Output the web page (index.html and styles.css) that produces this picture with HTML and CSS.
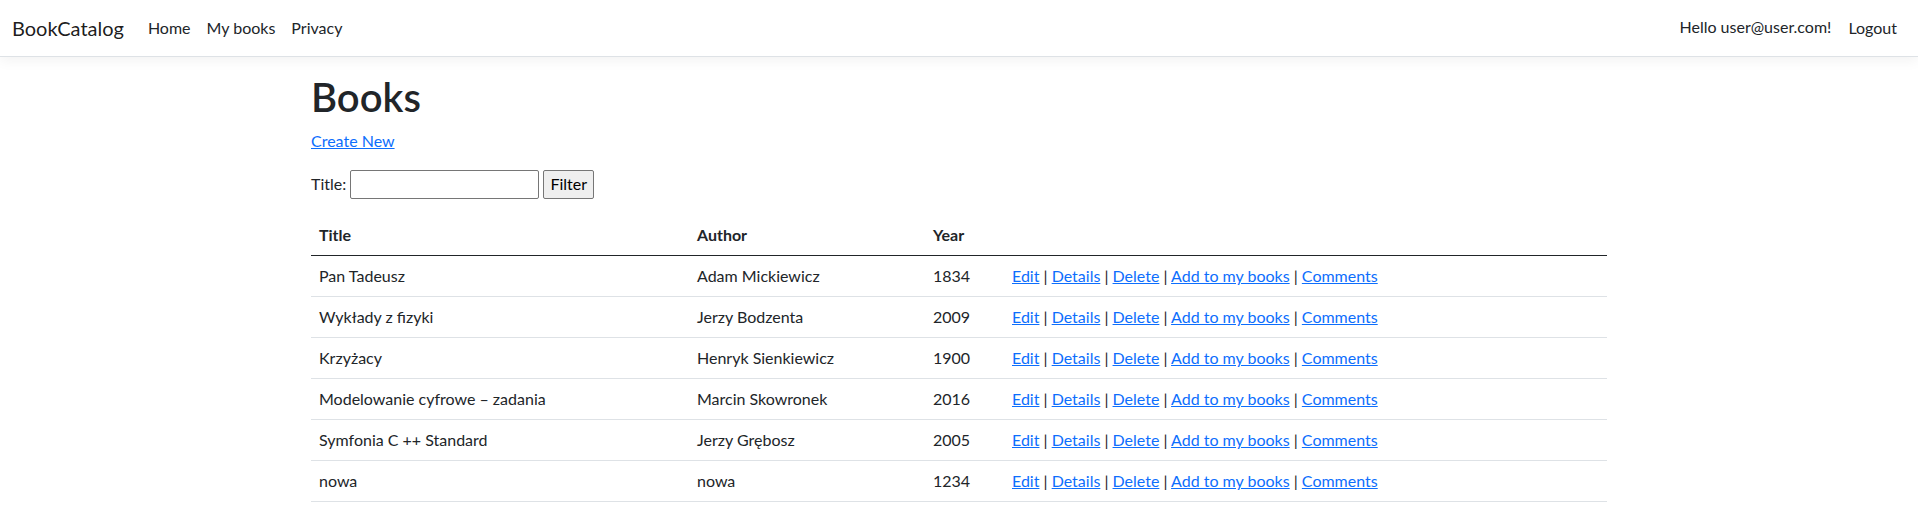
FILE: index.html
```html
<!DOCTYPE html>
<html lang="en">
<head>
<meta charset="utf-8">
<title>Index - BookCatalog</title>
<link rel="stylesheet" href="styles.css">
</head>
<body>
<header>
  <nav class="navbar">
    <a class="brand" href="#">BookCatalog</a>
    <div class="nav-collapse">
      <ul class="nav-list">
        <li><a class="nav-link" href="#">Home</a></li>
        <li><a class="nav-link" href="#">My books</a></li>
        <li><a class="nav-link" href="#">Privacy</a></li>
      </ul>
      <ul class="nav-list">
        <li><a class="nav-link" href="#">Hello user@user.com!</a></li>
        <li><button class="nav-link nav-btn" type="button">Logout</button></li>
      </ul>
    </div>
  </nav>
</header>
<main class="container">
  <h1 class="title">Books</h1>
  <p class="para"><a class="link" href="#">Create New</a></p>
  <form class="filter">
    <label class="filter-label" for="s">Title:</label>
    <input class="filter-input" id="s" type="text">
    <input class="filter-btn" type="submit" value="Filter">
  </form>
  <table class="table">
    <thead>
      <tr>
        <th class="col-title">Title</th>
        <th class="col-author">Author</th>
        <th class="col-year">Year</th>
        <th class="col-actions"></th>
      </tr>
    </thead>
    <tbody>
      <tr>
        <td>Pan Tadeusz</td><td>Adam Mickiewicz</td><td>1834</td>
        <td><a class="link" href="#">Edit</a> | <a class="link" href="#">Details</a> | <a class="link" href="#">Delete</a> | <a class="link" href="#">Add to my books</a> | <a class="link" href="#">Comments</a></td>
      </tr>
      <tr>
        <td>Wykłady z fizyki</td><td>Jerzy Bodzenta</td><td>2009</td>
        <td><a class="link" href="#">Edit</a> | <a class="link" href="#">Details</a> | <a class="link" href="#">Delete</a> | <a class="link" href="#">Add to my books</a> | <a class="link" href="#">Comments</a></td>
      </tr>
      <tr>
        <td>Krzyżacy</td><td>Henryk Sienkiewicz</td><td>1900</td>
        <td><a class="link" href="#">Edit</a> | <a class="link" href="#">Details</a> | <a class="link" href="#">Delete</a> | <a class="link" href="#">Add to my books</a> | <a class="link" href="#">Comments</a></td>
      </tr>
      <tr>
        <td>Modelowanie cyfrowe – zadania</td><td>Marcin Skowronek</td><td>2016</td>
        <td><a class="link" href="#">Edit</a> | <a class="link" href="#">Details</a> | <a class="link" href="#">Delete</a> | <a class="link" href="#">Add to my books</a> | <a class="link" href="#">Comments</a></td>
      </tr>
      <tr>
        <td>Symfonia C ++ Standard</td><td>Jerzy Grębosz</td><td>2005</td>
        <td><a class="link" href="#">Edit</a> | <a class="link" href="#">Details</a> | <a class="link" href="#">Delete</a> | <a class="link" href="#">Add to my books</a> | <a class="link" href="#">Comments</a></td>
      </tr>
      <tr>
        <td>nowa</td><td>nowa</td><td>1234</td>
        <td><a class="link" href="#">Edit</a> | <a class="link" href="#">Details</a> | <a class="link" href="#">Delete</a> | <a class="link" href="#">Add to my books</a> | <a class="link" href="#">Comments</a></td>
      </tr>
    </tbody>
  </table>
</main>
</body>
</html>
```

FILE: styles.css
```css
* { box-sizing: border-box; }

html, body {
  margin: 0;
  padding: 0;
}

body {
  font-family: "Lato", "Open Sans", "Liberation Sans", sans-serif;
  font-size: 16px;
  line-height: 1.5;
  color: #212529;
  background: #fff;
}

.navbar {
  display: flex;
  align-items: center;
  height: 57px;
  padding: 8px 12px;
  background: #fff;
  border-bottom: 1px solid #dee2e6;
  box-shadow: 0 4px 12px rgba(0, 0, 0, 0.05);
  margin-bottom: 16px;
}

.brand {
  font-size: 20px;
  line-height: 30px;
  padding: 5px 0;
  margin-right: 16px;
  color: rgba(0, 0, 0, 0.9);
  text-decoration: none;
  white-space: nowrap;
}

.nav-collapse {
  flex: 1;
  display: flex;
  justify-content: space-between;
  align-items: center;
}

.nav-list {
  display: flex;
  list-style: none;
  margin: 0;
  padding: 0;
}

.nav-link {
  display: block;
  padding: 8px;
  color: #212529;
  text-decoration: none;
  font: inherit;
  line-height: 24px;
}

.nav-btn {
  background: transparent;
  border: 1px solid transparent;
  cursor: pointer;
}

.container {
  width: 1320px;
  margin: 0 auto;
  padding: 0 12px 16px;
}

.title {
  font-size: 40px;
  font-weight: 600;
  line-height: 1.2;
  margin: 0 0 8px;
}

.para {
  margin: 0 0 16px;
}

.link {
  color: #0d6efd;
  text-decoration: underline;
}

.filter {
  display: flex;
  align-items: center;
  gap: 4px;
  height: 30px;
  margin: 0 0 16px;
}

.filter-label {
  line-height: 24px;
}

.filter-input {
  width: 189px;
  height: 29px;
  border: 1px solid #767676;
  border-radius: 2px;
  padding: 1px 2px;
  font: inherit;
  background: #fff;
}

.filter-btn {
  width: 51px;
  height: 29px;
  border: 1px solid #767676;
  border-radius: 2px;
  background: #efefef;
  color: #000;
  font: inherit;
  padding: 1px 6px;
}

.table {
  width: 100%;
  table-layout: fixed;
  border-collapse: collapse;
  margin-bottom: 16px;
  color: #212529;
}

.table th,
.table td {
  padding: 8px;
  text-align: left;
  vertical-align: top;
  border-bottom: 1px solid #dee2e6;
  white-space: nowrap;
}

.table th {
  font-weight: 700;
  border-bottom-color: #212529;
}

.col-title { width: 378px; }
.col-author { width: 236px; }
.col-year { width: 79px; }
```
